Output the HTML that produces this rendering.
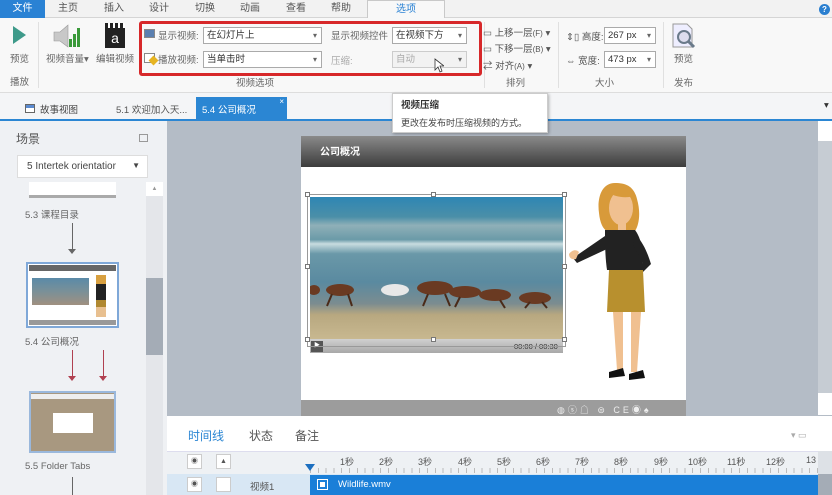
<!DOCTYPE html>
<html><head><meta charset="utf-8"><style>
*{margin:0;padding:0;box-sizing:border-box}
body{width:832px;height:495px;overflow:hidden;position:relative;background:#b4bcc6;font-family:"Liberation Sans","Noto Sans CJK SC",sans-serif;font-size:10px;color:#333}
.a{position:absolute}
.t{position:absolute;top:2px;font-size:10px;line-height:14px;color:#555}
.lbl{position:absolute;font-size:9.5px;color:#666}
.dd{position:absolute;height:17px;border:1px solid #aaa;background:#fff;font-size:9.5px;line-height:13px;padding:1px 3px;color:#333}
.dd:after{content:"▾";position:absolute;right:4px;top:1px;font-size:8px;color:#666}
</style></head><body>
<!-- menu tabs -->
<div class="a" style="left:0;top:0;width:832px;height:18px;background:#f2f2f2;border-bottom:1px solid #d5d5d5"></div>
<div class="a" style="left:0;top:0;width:45px;height:18px;background:#2a82d4;color:#fff;font-size:10px;text-align:center;line-height:17px">文件</div>
<div class="t" style="left:58px">主页</div><div class="t" style="left:104px">插入</div><div class="t" style="left:149px">设计</div><div class="t" style="left:195px">切换</div><div class="t" style="left:240px">动画</div><div class="t" style="left:286px">查看</div><div class="t" style="left:331px">帮助</div>
<div class="a" style="left:367px;top:0;width:78px;height:19px;background:#f8f8f8;border:1px solid #c9c9c9;border-bottom:none;text-align:center;line-height:17px;color:#2a82d4">选项</div>
<div class="a" style="left:819px;top:4px;width:11px;height:11px;border-radius:50%;background:#2a7fd0;color:#fff;font-size:8px;text-align:center;line-height:11px;font-weight:bold">?</div>
<!-- ribbon -->
<div class="a" style="left:0;top:18px;width:832px;height:75px;background:#f8f8f8;border-bottom:1px solid #ddd"></div>
<div class="a" style="left:13px;top:26px;width:0;height:0;border-left:13px solid #3e9a8a;border-top:9px solid transparent;border-bottom:9px solid transparent"></div>
<div class="lbl" style="left:10px;top:51px">预览</div>
<div class="lbl" style="left:10px;top:74px">播放</div>
<div class="a" style="left:38px;top:22px;width:1px;height:66px;background:#e0e0e0"></div>
<svg class="a" style="left:52px;top:23px" width="30" height="26"><path d="M2 9h6l8-7v22l-8-6H2z" fill="#c8c8c8" stroke="#999" stroke-width=".6"/><rect x="17" y="16" width="3" height="8" fill="#3a9a3a"/><rect x="21" y="11" width="3" height="13" fill="#3a9a3a"/><rect x="25" y="5" width="3" height="19" fill="#3a9a3a"/></svg>
<div class="lbl" style="left:46px;top:51px">视频音量▾</div>
<div class="a" style="left:105px;top:26px;width:20px;height:22px;background:#222;color:#fff;font-size:14px;text-align:center;line-height:24px">a</div>
<div class="a" style="left:105px;top:23px;width:20px;height:5px;background:repeating-linear-gradient(90deg,#222 0 3px,#fff 3px 5px)"></div>
<div class="lbl" style="left:96px;top:51px">编辑视频</div>
<!-- video options -->
<div class="a" style="left:144px;top:29px;width:11px;height:9px;background:#5a7fb0;border:1px solid #888"></div>
<div class="lbl" style="left:158px;top:28px">显示视频:</div>
<div class="dd" style="left:203px;top:27px;width:119px">在幻灯片上</div>
<div class="a" style="left:144px;top:53px;width:11px;height:10px;border:1px solid #888;background:#fff"></div>
<div class="a" style="left:150px;top:57px;width:7px;height:7px;background:#e6b422;transform:rotate(45deg)"></div>
<div class="lbl" style="left:158px;top:52px">播放视频:</div>
<div class="dd" style="left:203px;top:51px;width:119px">当单击时</div>
<div class="lbl" style="left:331px;top:28px">显示视频控件</div>
<div class="dd" style="left:392px;top:27px;width:75px">在视频下方</div>
<div class="lbl" style="left:331px;top:53px;color:#aaa">压缩:</div>
<div class="dd" style="left:392px;top:51px;width:75px;background:#f2f2f2;color:#aaa;border-color:#ccc">自动</div>
<svg class="a" style="left:434px;top:58px" width="10" height="15"><path d="M1 1v11l3-3 2 5 2-1-2-5h4z" fill="#fff" stroke="#333" stroke-width=".8"/></svg>
<div class="a" style="left:139px;top:21px;width:343px;height:55px;border:3px solid #d7282a;border-radius:3px"></div>
<div class="lbl" style="left:236px;top:75px">视频选项</div>
<div class="a" style="left:484px;top:22px;width:1px;height:66px;background:#e0e0e0"></div>
<div class="lbl" style="left:483px;top:25px;color:#555">▭ 上移一层<span style="font-size:8px">(F)</span> ▾</div>
<div class="lbl" style="left:483px;top:41px;color:#555">▭ 下移一层<span style="font-size:8px">(B)</span> ▾</div>
<div class="lbl" style="left:483px;top:58px;color:#555">⇄ 对齐<span style="font-size:8px">(A)</span> ▾</div>
<div class="lbl" style="left:506px;top:75px">排列</div>
<div class="a" style="left:558px;top:22px;width:1px;height:66px;background:#e0e0e0"></div>
<div class="lbl" style="left:566px;top:29px;color:#555">⇕▯ 高度:</div>
<div class="dd" style="left:604px;top:27px;width:52px;padding-right:12px">267 px</div>
<div class="lbl" style="left:566px;top:53px;color:#555">⇔ 宽度:</div>
<div class="dd" style="left:604px;top:51px;width:52px">473 px</div>
<div class="lbl" style="left:595px;top:75px">大小</div>
<div class="a" style="left:663px;top:22px;width:1px;height:66px;background:#e0e0e0"></div>
<svg class="a" style="left:670px;top:22px" width="28" height="28"><path d="M3 2h14l5 5v18H3z" fill="#eef" stroke="#999"/><circle cx="14" cy="15" r="6" fill="#dde" stroke="#6a7a8a" stroke-width="2"/><path d="M18 19l6 6" stroke="#6a7a8a" stroke-width="3"/></svg>
<div class="lbl" style="left:674px;top:51px">预览</div>
<div class="lbl" style="left:674px;top:75px">发布</div>
<!-- doc tabs -->
<div class="a" style="left:0;top:93px;width:832px;height:27px;background:#f4f5f7"></div>
<div class="a" style="left:0;top:119px;width:832px;height:2px;background:#2b86d3"></div>
<div class="a" style="left:25px;top:104px;width:10px;height:9px;border:1px solid #666;background:linear-gradient(#5a8ad0 0 3px,#fff 3px)"></div>
<div class="lbl" style="left:40px;top:102px;color:#444">故事视图</div>
<div class="lbl" style="left:116px;top:102px;color:#555">5.1 欢迎加入天...</div>
<div class="a" style="left:196px;top:97px;width:91px;height:23px;background:#2b86d3;color:#fff;font-size:9.5px;padding:5px 0 0 6px">5.4 公司概况<span style="position:absolute;right:3px;top:0;font-size:8px">×</span></div>
<div class="lbl" style="left:824px;top:100px;color:#333">▾</div>
<!-- left panel -->
<div class="a" style="left:0;top:121px;width:167px;height:374px;background:#eff1f4"></div>
<div class="a" style="left:16px;top:130px;font-size:12px;color:#555">场景</div>
<div class="a" style="left:139px;top:134px;width:9px;height:8px;border:1px solid #999"></div>
<div class="a" style="left:17px;top:155px;width:131px;height:23px;background:#fff;border:1px solid #ddd;font-size:10px;padding:5px 0 0 9px;color:#444">5 Intertek orientatior<span style="position:absolute;right:7px;top:5px;font-size:8px">▼</span></div>
<div class="a" style="left:29px;top:182px;width:87px;height:16px;background:#fff;border-bottom:3px solid #aaa"></div>
<div class="lbl" style="left:25px;top:207px">5.3 课程目录</div>
<div class="a" style="left:72px;top:223px;width:1px;height:27px;background:#666"></div>
<div class="a" style="left:68px;top:249px;border-left:4px solid transparent;border-right:4px solid transparent;border-top:5px solid #666"></div>
<div class="a" style="left:26px;top:262px;width:93px;height:66px;border:2px solid #7fa8d8;background:#fff"></div>
<div class="a" style="left:29px;top:265px;width:87px;height:6px;background:#666"></div>
<div class="a" style="left:32px;top:278px;width:57px;height:27px;background:linear-gradient(#5a8aa8,#7a9098 50%,#a09080)"></div>
<div class="a" style="left:96px;top:275px;width:10px;height:42px;background:linear-gradient(#d8a040 0 9px,#222 9px 25px,#b08830 25px 32px,#e8c090 32px)"></div>
<div class="a" style="left:29px;top:320px;width:87px;height:5px;background:#999"></div>
<div class="lbl" style="left:25px;top:334px">5.4 公司概况</div>
<div class="a" style="left:72px;top:350px;width:1px;height:27px;background:#b04050"></div>
<div class="a" style="left:68px;top:376px;border-left:4px solid transparent;border-right:4px solid transparent;border-top:5px solid #b04050"></div>
<div class="a" style="left:103px;top:350px;width:1px;height:27px;background:#b04050"></div>
<div class="a" style="left:99px;top:376px;border-left:4px solid transparent;border-right:4px solid transparent;border-top:5px solid #b04050"></div>
<div class="a" style="left:29px;top:391px;width:87px;height:62px;border:2px solid #9ab8dc;background:#a89880"></div>
<div class="a" style="left:31px;top:394px;width:83px;height:5px;background:#eee"></div>
<div class="a" style="left:53px;top:413px;width:40px;height:20px;background:#fff"></div>
<div class="lbl" style="left:25px;top:461px">5.5 Folder Tabs</div>
<div class="a" style="left:72px;top:477px;width:1px;height:18px;background:#666"></div>
<div class="a" style="left:146px;top:182px;width:17px;height:313px;background:#e4e6ea"></div>
<div class="a" style="left:146px;top:182px;width:17px;height:14px;background:#fff;font-size:6px;text-align:center;color:#999;line-height:14px">▲</div>
<div class="a" style="left:146px;top:278px;width:17px;height:77px;background:#a4acb6"></div>
<!-- canvas right scrollbar -->
<div class="a" style="left:818px;top:121px;width:14px;height:294px;background:#c6ccd3"></div>
<div class="a" style="left:818px;top:121px;width:14px;height:20px;background:#fff"></div>
<div class="a" style="left:818px;top:393px;width:14px;height:22px;background:#fff"></div>
<!-- slide -->
<div class="a" style="left:301px;top:136px;width:385px;height:281px;background:#fff"></div>
<div class="a" style="left:301px;top:136px;width:385px;height:31px;background:linear-gradient(#8a8a8a,#3c3c3c)"></div>
<div class="a" style="left:320px;top:143px;color:#fff;font-weight:bold;font-size:10px">公司概况</div>
<div class="a" style="left:301px;top:400px;width:385px;height:17px;background:#9c9c9c"></div>
<div class="a" style="left:557px;top:403px;color:#eee;font-size:9px;letter-spacing:3px">◍ⓢ☖ ⊜ CE◉♠</div>
<div class="a" style="left:310px;top:197px;width:253px;height:142px;background:linear-gradient(#2e86b4 0,#4b8fa8 14%,#8fb0b8 20%,#6a9aa8 30%,#c8dce0 33%,#6a98a8 40%,#5a8aa0 60%,#7b8c90 75%,#b8a880 83%,#c8b890 100%)"></div>
<svg class="a" style="left:310px;top:250px" width="253" height="60"><g fill="#6a3a22"><ellipse cx="30" cy="40" rx="14" ry="6"/><ellipse cx="125" cy="38" rx="18" ry="7"/><ellipse cx="155" cy="42" rx="16" ry="6"/><ellipse cx="185" cy="45" rx="16" ry="6"/><ellipse cx="225" cy="48" rx="16" ry="6"/><ellipse cx="4" cy="40" rx="6" ry="5"/></g><ellipse cx="85" cy="40" rx="14" ry="6" fill="#e8e8e8"/><g stroke="#4a2a18" stroke-width="2"><path d="M22 44l-5 12M38 44l4 12M118 44l-5 12M135 44l5 12M150 47l-5 10M190 50l5 8M220 52l-5 6M232 52l5 6"/></g></svg>
<div class="a" style="left:310px;top:339px;width:253px;height:14px;background:linear-gradient(#d0d0d0,#a8a8a8)"></div>
<div class="a" style="left:311px;top:341px;width:12px;height:11px;background:#555;color:#fff;font-size:6px;text-align:center;line-height:11px">▶</div>
<div class="a" style="left:514px;top:342px;font-size:7.5px;color:#333">00:00 / 00:30</div>
<div class="a" style="left:307px;top:194px;width:259px;height:153px;border:1px solid #999"></div>
<div class="a" style="left:305px;top:192px;width:5px;height:5px;border:1px solid #777;background:#fff"></div>
<div class="a" style="left:431px;top:192px;width:5px;height:5px;border:1px solid #777;background:#fff"></div>
<div class="a" style="left:562px;top:192px;width:5px;height:5px;border:1px solid #777;background:#fff"></div>
<div class="a" style="left:305px;top:264px;width:5px;height:5px;border:1px solid #777;background:#fff"></div>
<div class="a" style="left:562px;top:264px;width:5px;height:5px;border:1px solid #777;background:#fff"></div>
<div class="a" style="left:305px;top:337px;width:5px;height:5px;border:1px solid #777;background:#fff"></div>
<div class="a" style="left:431px;top:337px;width:5px;height:5px;border:1px solid #777;background:#fff"></div>
<div class="a" style="left:562px;top:337px;width:5px;height:5px;border:1px solid #777;background:#fff"></div>
<!-- woman -->
<svg class="a" style="left:565px;top:178px" width="110" height="215">
<path d="M50 5c-14 0-18 16-16 30 1 10 4 16 8 18l28 0c4-6 6-18 2-32-3-12-10-16-22-16z" fill="#d89a3a"/>
<ellipse cx="56" cy="30" rx="12" ry="17" fill="#f0c090"/>
<path d="M44 14c6 6 18 6 26 4l-4-8c-8-4-18-2-22 4z" fill="#d89a3a"/>
<rect x="53" y="44" width="8" height="10" fill="#f0c090"/>
<path d="M40 52l30 0c6 8 8 18 8 40l-36 0c-2-14 -2-28 -2-40z" fill="#222"/>
<path d="M40 58l-32 22 4 5 30-14z" fill="#222"/>
<path d="M4 76c3-4 7-5 10-2l-3 7c-4 1-7-1-7-5z" fill="#f0c090"/>
<path d="M70 56c10 10 14 24 16 30l-12 12-4-5 8-8-10-18z" fill="#222"/>
<path d="M44 92l34 0 2 42-38 0z" fill="#b8902e"/>
<path d="M48 134l10 0 0 58-6 0zM66 134l10 0-4 60-6 0z" fill="#f0c090"/>
<path d="M44 194l14-4 2 8-16 2zM64 196l14-4 2 8-16 2z" fill="#111"/>
</svg>
<!-- tooltip -->
<div class="a" style="left:392px;top:93px;width:156px;height:40px;background:#fff;box-shadow:1px 1px 3px rgba(0,0,0,.3);border:1px solid #ccc"></div>
<div class="a" style="left:401px;top:97px;font-size:9.5px;font-weight:bold;color:#333">视频压缩</div>
<div class="a" style="left:401px;top:116px;font-size:9px;color:#444">更改在发布时压缩视频的方式。</div>
<!-- timeline -->
<div class="a" style="left:167px;top:416px;width:665px;height:79px;background:#fff"></div>
<div class="a" style="left:188px;top:427px;font-size:12px;color:#2b86d3">时间线</div>
<div class="a" style="left:249px;top:427px;font-size:12px;color:#555">状态</div>
<div class="a" style="left:295px;top:427px;font-size:12px;color:#555">备注</div>
<div class="a" style="left:791px;top:430px;font-size:9px;color:#aaa">▾ ▭</div>
<div class="a" style="left:167px;top:451px;width:665px;height:23px;background:#eef1f4;border-top:1px solid #dde"></div>
<div class="a" style="left:187px;top:454px;width:15px;height:15px;background:#fff;border:1px solid #ccc;font-size:7px;text-align:center;line-height:13px;color:#555">◉</div>
<div class="a" style="left:216px;top:454px;width:15px;height:15px;background:#fff;border:1px solid #ccc;font-size:7px;text-align:center;line-height:13px;color:#555">▲</div>
<div class="a" style="left:310px;top:453px;width:508px;height:21px;font-size:9px;color:#555">
<span class="a" style="left:30px;top:2px">1秒</span><span class="a" style="left:69px;top:2px">2秒</span><span class="a" style="left:108px;top:2px">3秒</span><span class="a" style="left:148px;top:2px">4秒</span><span class="a" style="left:187px;top:2px">5秒</span><span class="a" style="left:226px;top:2px">6秒</span><span class="a" style="left:265px;top:2px">7秒</span><span class="a" style="left:304px;top:2px">8秒</span><span class="a" style="left:344px;top:2px">9秒</span><span class="a" style="left:378px;top:2px">10秒</span><span class="a" style="left:417px;top:2px">11秒</span><span class="a" style="left:456px;top:2px">12秒</span><span class="a" style="left:496px;top:2px">13</span>
<div class="a" style="left:0;top:15px;width:508px;height:5px;background:repeating-linear-gradient(90deg,#bbb 0 1px,transparent 1px 7.8px)"></div></div>
<div class="a" style="left:305px;top:464px;border-left:5px solid transparent;border-right:5px solid transparent;border-top:7px solid #1c6fc0"></div>
<div class="a" style="left:167px;top:474px;width:665px;height:21px;background:#d8e7f4"></div>
<div class="a" style="left:187px;top:477px;width:15px;height:15px;background:#fff;border:1px solid #ccc;font-size:7px;text-align:center;line-height:13px;color:#555">◉</div>
<div class="a" style="left:216px;top:477px;width:15px;height:15px;background:#fff;border:1px solid #ccc"></div>
<div class="a" style="left:250px;top:479px;font-size:9.5px;color:#555">视频1</div>
<div class="a" style="left:310px;top:475px;width:508px;height:20px;background:#1a7fd8"></div>
<div class="a" style="left:318px;top:480px;width:9px;height:9px;background:#fff;border:2px solid #1a7fd8;outline:1px solid #fff"></div>
<div class="a" style="left:338px;top:479px;font-size:9.5px;color:#fff">Wildlife.wmv</div>
<div class="a" style="left:818px;top:451px;width:14px;height:44px;background:#dde1e6"></div>
<div class="a" style="left:818px;top:474px;width:14px;height:21px;background:#a4acb6"></div>
</body></html>
